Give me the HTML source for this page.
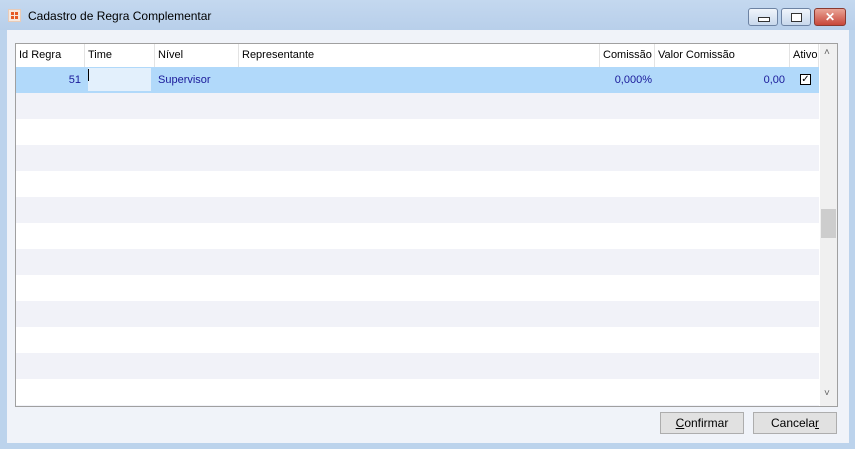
<!DOCTYPE html><html><head><style>
body{margin:0;width:855px;height:449px;background:#bcd3ec;font-family:"Liberation Sans",sans-serif;font-size:11px;position:relative;overflow:hidden}
.a{position:absolute}
.client{left:7px;top:30px;width:842px;height:413px;background:#f0f3f9}
.grid{left:15px;top:43px;width:821px;height:362px;border:1px solid #a0a0a0;background:#fff;overflow:hidden}
.hd{top:0;height:23px;line-height:23px;border-right:1px solid #e3e3e3;padding-left:3px;color:#000;box-sizing:border-box}
.btn{height:22px;top:412px;width:84px;background:#e1e1e1;border:1px solid #adadad;box-sizing:border-box;text-align:center;line-height:20px;font-size:12px}
.wb{top:8px;height:18px;border:1px solid #6d83a3;border-radius:3px;box-sizing:border-box;background:linear-gradient(#f0f5fb,#c8d8ec)}
</style></head><body>
<div class="a" style="left:0;top:0;width:855px;height:30px;background:linear-gradient(#c4d8ef,#b8cfea)"></div>
<div class="a" style="left:8px;top:9px;width:13px;height:13px;background:#f6e9e0;border:1px solid #e8cbb8;box-sizing:border-box">
<svg width="11" height="11" style="position:absolute;left:0;top:0"><path d="M2 2h3v3H2zM6 2h3v3H6zM2 6h3v3H2zM6 6h3v3H6z" fill="#e65a25"/></svg></div>
<div class="a" style="left:28px;top:9px;font-size:12px;color:#000">Cadastro de Regra Complementar</div>
<div class="a wb" style="left:748px;width:30px"><div class="a" style="left:9px;top:8px;width:10px;height:3px;border:1px solid #333;background:#fff"></div></div>
<div class="a wb" style="left:781px;width:30px"><div class="a" style="left:9px;top:4px;width:9px;height:7px;border:1px solid #333;background:#fff"></div></div>
<div class="a wb" style="left:814px;width:32px;background:linear-gradient(#e9a496,#c8473a);border-color:#8a3a30;color:#fff;font-weight:bold;text-align:center;line-height:16px;font-size:12px">✕</div>
<div class="a client"></div>
<div class="a grid">
<div class="a hd" style="left:0;width:69px">Id Regra</div>
<div class="a hd" style="left:69px;width:70px">Time</div>
<div class="a hd" style="left:139px;width:84px">Nível</div>
<div class="a hd" style="left:223px;width:361px">Representante</div>
<div class="a hd" style="left:584px;width:55px">Comissão</div>
<div class="a hd" style="left:639px;width:135px">Valor Comissão</div>
<div class="a hd" style="left:774px;width:29px">Ativo</div>
<div class="a" style="left:0;top:23px;width:803px;height:26px;background:#b1d9fa;color:#1a1a9a;line-height:26px">
<div class="a" style="right:738px">51</div>
<div class="a" style="left:72px;top:1px;width:63px;height:23px;background:#e3f0fc"></div>
<div class="a" style="left:72px;top:2px;width:1px;height:12px;background:#000"></div>
<div class="a" style="left:142px">Supervisor</div>
<div class="a" style="right:167px">0,000%</div>
<div class="a" style="right:34px">0,00</div>
<div class="a" style="left:784px;top:7px;width:11px;height:11px;border:1px solid #000;box-sizing:border-box;background:#fff;font-size:10px;line-height:9px;text-align:center;color:#000">✓</div>
</div>
<div class="a" style="left:0;top:49px;width:803px;height:313px;background:repeating-linear-gradient(#f1f2f8 0 26px,#fff 26px 52px)"></div>
<div class="a" style="left:804px;top:0;width:17px;height:362px;background:#f0f0f0"></div>
<div class="a" style="left:808px;top:3px;font-size:10px;color:#606060">˄</div>
<div class="a" style="left:805px;top:165px;width:15px;height:29px;background:#cdcdcd"></div>
<div class="a" style="left:808px;top:344px;font-size:10px;color:#606060">˅</div>
</div>
<div class="a btn" style="left:660px"><u>C</u>onfirmar</div>
<div class="a btn" style="left:753px">Cancela<u>r</u></div>
</body></html>
